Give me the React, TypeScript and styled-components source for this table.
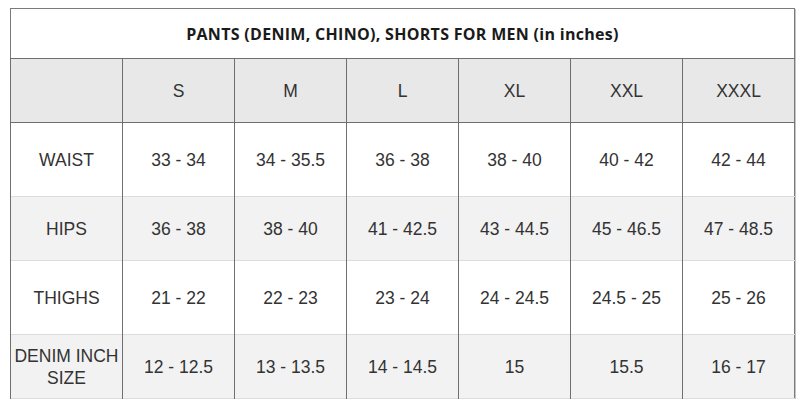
import { FunctionComponent } from "react";
import styled, { createGlobalStyle } from "styled-components";

const GlobalStyle = createGlobalStyle`
  html, body {
    margin: 0;
    padding: 0;
    background: #ffffff;
  }
`;

const Page = styled.div`
  padding: 8px 0 0 10px;
`;

const Table = styled.table`
  border-collapse: collapse;
  table-layout: fixed;
  width: 785px;
  border: 1px solid #7a7a7a;
  box-shadow: 1px 1px 0 #c4c4c4;
  font-family: "Liberation Sans", Arial, sans-serif;
  font-size: 17.5px;
  color: #333333;
`;

const Title = styled.th`
  height: 49px;
  padding: 0;
  background: #ffffff;
  font-family: "Open Sans", "Noto Sans", sans-serif;
  font-weight: 700;
  font-size: 16px;
  letter-spacing: 0.3px;
  color: #1a1a1a;
  border-bottom: 1px solid #6f6f6f;
`;

const Row = styled.tr<{ $height: number; $shade: string; $strong?: boolean }>`
  height: ${(p) => p.$height}px;
  background: ${(p) => p.$shade};
  border-bottom: 1px solid ${(p) => (p.$strong ? "#6f6f6f" : "#dcdcdc")};
`;

const Cell = styled.td`
  padding: 0;
  text-align: center;
  vertical-align: middle;
  border-left: 1px solid #6f6f6f;
  line-height: 22px;
`;

const sizes = ["S", "M", "L", "XL", "XXL", "XXXL"];

const rows = [
  { label: "WAIST", height: 74, shade: "#ffffff", values: ["33 - 34", "34 - 35.5", "36 - 38", "38 - 40", "40 - 42", "42 - 44"] },
  { label: "HIPS", height: 64, shade: "#f2f2f2", values: ["36 - 38", "38 - 40", "41 - 42.5", "43 - 44.5", "45 - 46.5", "47 - 48.5"] },
  { label: "THIGHS", height: 74, shade: "#ffffff", values: ["21 - 22", "22 - 23", "23 - 24", "24 - 24.5", "24.5 - 25", "25 - 26"] },
  { label: "DENIM INCH SIZE", height: 64, shade: "#f2f2f2", values: ["12 - 12.5", "13 - 13.5", "14 - 14.5", "15", "15.5", "16 - 17"] },
];

const App: FunctionComponent = () => {
  return (
    <>
      <GlobalStyle />
      <Page>
        <Table>
          <thead>
            <tr>
              <Title colSpan={7}>PANTS (DENIM, CHINO), SHORTS FOR MEN (in inches)</Title>
            </tr>
          </thead>
          <tbody>
            <Row $height={64} $shade="#e8e8e8" $strong>
              <Cell />
              {sizes.map((s) => (
                <Cell key={s}>{s}</Cell>
              ))}
            </Row>
            {rows.map((r) => (
              <Row key={r.label} $height={r.height} $shade={r.shade}>
                <Cell>{r.label}</Cell>
                {r.values.map((v, i) => (
                  <Cell key={i}>{v}</Cell>
                ))}
              </Row>
            ))}
          </tbody>
        </Table>
      </Page>
    </>
  );
};

export default App;
